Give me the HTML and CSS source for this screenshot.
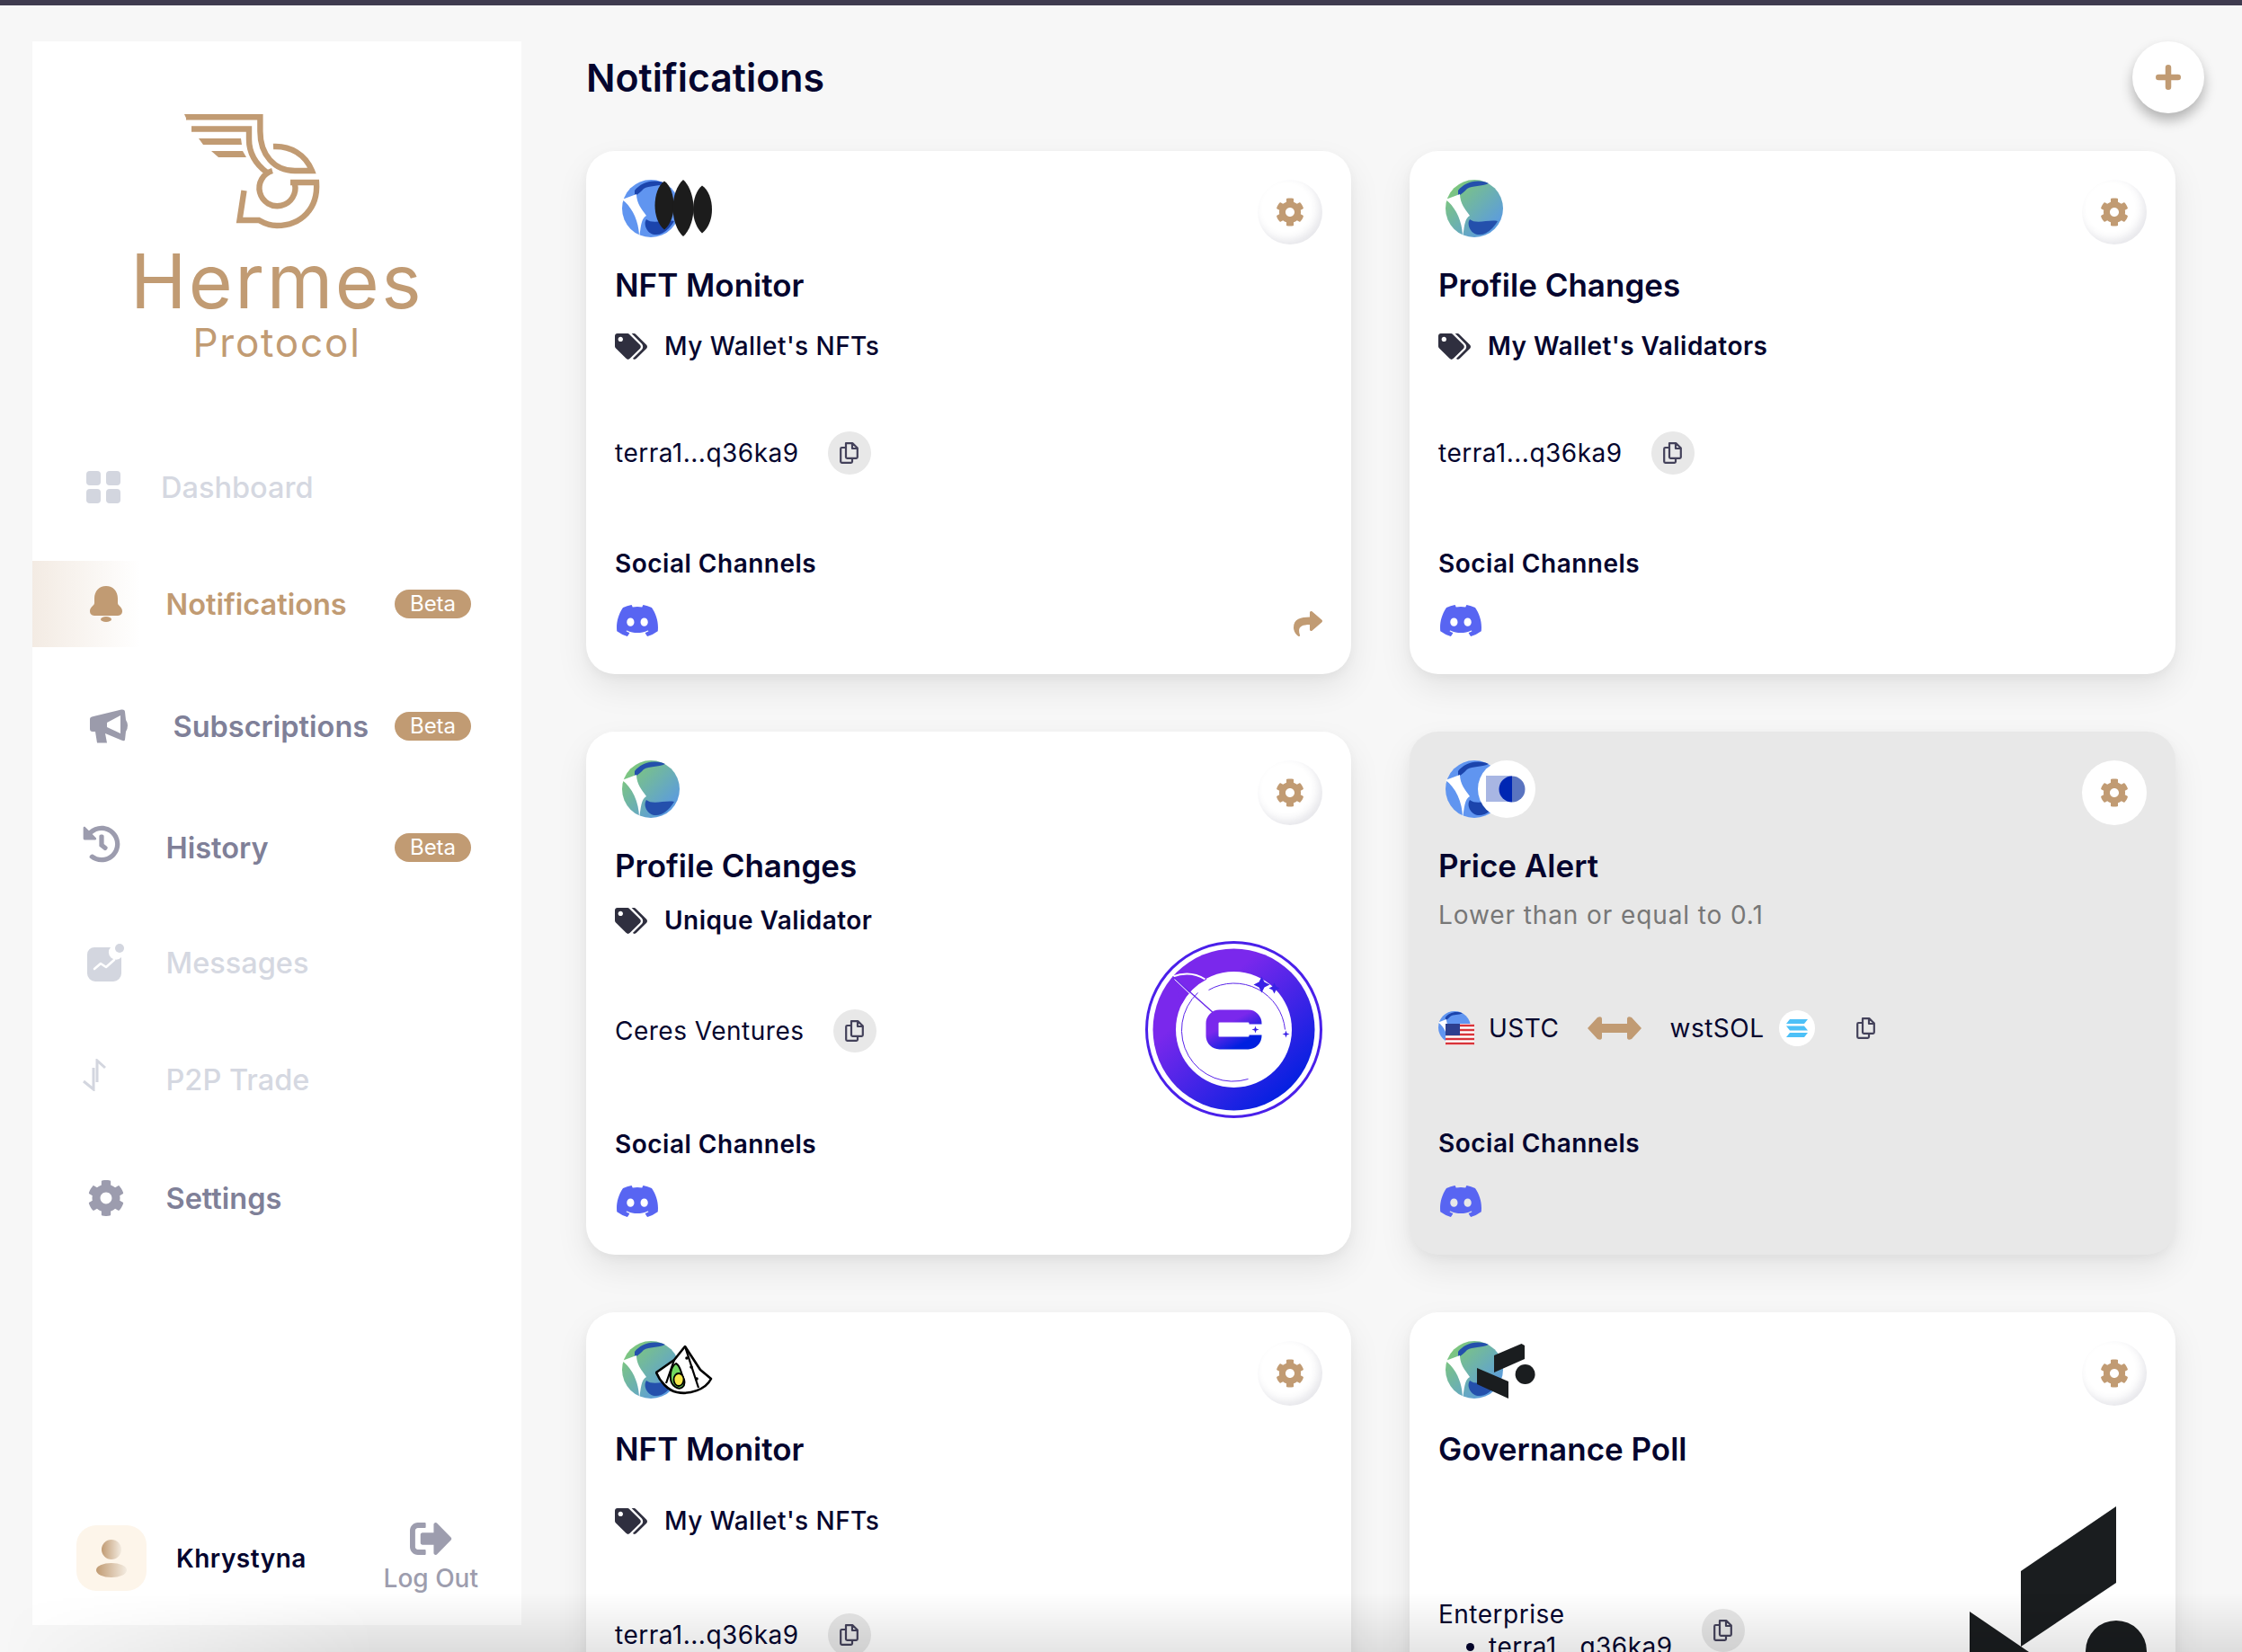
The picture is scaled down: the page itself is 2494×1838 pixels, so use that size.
FILE: index.html
```html
<!DOCTYPE html>
<html lang="en">
<head>
<meta charset="utf-8">
<title>Hermes Protocol - Notifications</title>
<link rel="stylesheet" href="styles.css">
</head>
<body>
<svg class="sprite" aria-hidden="true">
  <defs>
    <linearGradient id="terraGreen" x1="0" y1="0" x2="1" y2="1"><stop offset="0.15" stop-color="#7dc67f"/><stop offset="0.85" stop-color="#5b9be0"/></linearGradient>
    <linearGradient id="ceresGrad" x1="0.15" y1="0.1" x2="0.85" y2="0.9"><stop offset="0.25" stop-color="#7a28ec"/><stop offset="1" stop-color="#0020e0"/></linearGradient>
    <linearGradient id="avatarGrad" x1="0" y1="0" x2="1" y2="0"><stop offset="0" stop-color="#c19b73"/><stop offset="1" stop-color="#f3ebe0"/></linearGradient>
    <symbol id="terra-blue" viewBox="0 0 64 64">
      <circle cx="32" cy="32" r="32" fill="#6095f0"/>
      <path d="M14 12C20 4 34 -2 48 4C40 8 30 6 24 10C20 14 18 16 14 18Z" fill="#1b44ac"/>
      <path d="M27 44C34 50 48 44 58 46C52 56 44 62 36 61C28 60 23 50 27 44Z" fill="#1b44ac"/>
      <path d="M0 22L16 16C16 26 22 33 27 40C21 43 21 53 19 64C19 46 11 30 0 22Z" fill="#fff"/>
    </symbol>
    <symbol id="terra-green" viewBox="0 0 64 64">
      <circle cx="32" cy="32" r="32" fill="url(#terraGreen)"/>
      <path d="M14 12C20 4 34 -2 48 4C40 8 30 6 24 10C20 14 18 16 14 18Z" fill="#2450ac"/>
      <path d="M27 44C34 50 48 44 58 46C52 56 44 62 36 61C28 60 23 50 27 44Z" fill="#2450ac"/>
      <path d="M0 22L16 16C16 26 22 33 27 40C21 43 21 53 19 64C19 46 11 30 0 22Z" fill="#fff"/>
    </symbol>
    <symbol id="tag" viewBox="0 0 640 512"><path d="M497.941 225.941L286.059 14.059A48 48 0 0 0 252.118 0H48C21.49 0 0 21.49 0 48v204.118a48 48 0 0 0 14.059 33.941l211.882 211.882c18.744 18.745 49.136 18.746 67.882 0l204.118-204.118c18.745-18.745 18.745-49.137 0-67.882zM112 160c-26.51 0-48-21.49-48-48s21.49-48 48-48 48 21.49 48 48-21.49 48-48 48zm513.941 133.823L421.823 497.941c-18.745 18.745-49.137 18.745-67.882 0l-.36-.36L527.64 323.522c16.999-16.999 26.36-39.6 26.36-63.64s-9.362-46.641-26.36-63.64L331.397 0h48.721a48 48 0 0 1 33.941 14.059l211.882 211.882c18.745 18.745 18.745 49.137 0 67.882z"/></symbol>
    <symbol id="cog" viewBox="17 8 478 496"><path d="M487.4 315.7l-42.6-24.6c4.3-23.2 4.3-47 0-70.2l42.6-24.6c4.9-2.8 7.1-8.6 5.5-14-11.1-35.6-30-67.8-54.7-94.6-3.8-4.1-10-5.1-14.8-2.3L380.8 110c-17.9-15.4-38.5-27.3-60.8-35.1V25.8c0-5.6-3.9-10.5-9.4-11.7-36.7-8.2-74.3-7.8-109.2 0-5.5 1.2-9.4 6.1-9.4 11.7V75c-22.2 7.9-42.8 19.8-60.8 35.1L88.7 85.5c-4.9-2.8-11-1.9-14.8 2.3-24.7 26.7-43.6 58.9-54.7 94.6-1.7 5.4.6 11.2 5.5 14L67.3 221c-4.3 23.2-4.3 47 0 70.2l-42.6 24.6c-4.9 2.8-7.1 8.6-5.5 14 11.1 35.6 30 67.8 54.7 94.6 3.8 4.1 10 5.1 14.8 2.3l42.6-24.6c17.9 15.4 38.5 27.3 60.8 35.1v49.2c0 5.6 3.9 10.5 9.4 11.7 36.7 8.2 74.3 7.8 109.2 0 5.5-1.2 9.4-6.1 9.4-11.7v-49.2c22.2-7.9 42.8-19.8 60.8-35.1l42.6 24.6c4.9 2.8 11 1.9 14.8-2.3 24.7-26.7 43.6-58.9 54.7-94.6 1.500-5.500-.7-11.300-5.600-14.100zM256 336c-44.100 0-80-35.900-80-80s35.900-80 80-80 80 35.900 80 80-35.900 80-80 80z"/></symbol>
    <symbol id="discord" viewBox="28 32 584 448"><path d="M524.531,69.836a1.5,1.5,0,0,0-.764-.7A485.065,485.065,0,0,0,404.081,32.03a1.816,1.816,0,0,0-1.923.91,337.461,337.461,0,0,0-14.9,30.6,447.848,447.848,0,0,0-134.426,0,309.541,309.541,0,0,0-15.135-30.6,1.89,1.89,0,0,0-1.924-.91A483.689,483.689,0,0,0,116.085,69.137a1.712,1.712,0,0,0-.788.676C39.068,183.651,18.186,294.69,28.43,404.354a2.016,2.016,0,0,0,.765,1.375A487.666,487.666,0,0,0,176.02,479.918a1.9,1.9,0,0,0,2.063-.676A348.2,348.2,0,0,0,208.12,430.4a1.86,1.86,0,0,0-1.019-2.588,321.173,321.173,0,0,1-45.868-21.853,1.885,1.885,0,0,1-.185-3.126c3.082-2.309,6.166-4.711,9.109-7.137a1.819,1.819,0,0,1,1.9-.256c96.229,43.917,200.41,43.917,295.5,0a1.812,1.812,0,0,1,1.924.233c2.944,2.426,6.027,4.851,9.132,7.16a1.884,1.884,0,0,1-.162,3.126,301.407,301.407,0,0,1-45.89,21.83,1.875,1.875,0,0,0-1,2.611,391.055,391.055,0,0,0,30.014,48.815,1.864,1.864,0,0,0,2.063.7A486.048,486.048,0,0,0,610.7,405.729a1.882,1.882,0,0,0,.765-1.352C623.729,277.594,590.933,167.465,524.531,69.836ZM222.491,337.58c-28.972,0-52.844-26.587-52.844-59.239S193.056,219.1,222.491,219.1c29.665,0,53.306,26.82,52.843,59.239C275.334,310.993,251.924,337.58,222.491,337.58Zm195.38,0c-28.971,0-52.843-26.587-52.843-59.239S388.437,219.1,417.871,219.1c29.667,0,53.307,26.82,52.844,59.239C470.715,310.993,447.538,337.58,417.871,337.58Z"/></symbol>
    <symbol id="copy" viewBox="0 0 21 24"><path d="M7 1.2H14.5L19.8 6.5V16.5A1.3 1.3 0 0 1 18.5 17.8H8.3A1.3 1.3 0 0 1 7 16.5ZM14 1.5V7H19.5M7 6H2.5A1.3 1.3 0 0 0 1.2 7.3V21.5A1.3 1.3 0 0 0 2.5 22.8H12.7A1.3 1.3 0 0 0 14 21.5V18" fill="none" stroke="#43415a" stroke-width="2.2" stroke-linejoin="round"/></symbol>
  </defs>
</svg>

<div class="topbar"></div>
<div class="app">
  <aside class="sidebar">
    <div class="brand">
      <svg class="brand-mark" viewBox="190 120 236 140" fill="none" stroke="#c19b73" stroke-width="6.4">
        <path d="M205 127H208V133.400Z" fill="#c19b73" stroke="none"/>
        <path d="M207 130.200H289.400V146C289.400 172 305 190 328 190H347C340 172 323 162 304 163"/>
        <path d="M213 143.500H277V155C277 170 285 183 297 192"/>
        <path d="M303 190A20 20 0 1 0 328 205"/>
        <path d="M323 203H352C354 232 335 251 308 251C300 251 295 249 288 245H266.500L271.500 212"/>
        <polygon points="221,154 268,154 269,161 226,161" fill="#c19b73" stroke="none"/>
        <polygon points="235,168 270,168 274,175 243,175" fill="#c19b73" stroke="none"/>
      </svg>
      <div class="brand-name">Hermes</div>
      <div class="brand-sub">Protocol</div>
    </div>
    <nav class="nav">
      <div class="nav-item is-disabled">
        <span class="nav-icon nav-icon--dash">
          <svg width="38" height="36" viewBox="0 0 38 36" fill="#d3d6df"><rect width="16" height="16" rx="4"/><rect x="22" width="16" height="16" rx="4"/><rect y="20" width="16" height="16" rx="4"/><rect x="22" y="20" width="16" height="16" rx="4"/></svg>
        </span>
        <span class="nav-label">Dashboard</span>
      </div>
      <div class="nav-item is-active">
        <span class="nav-icon">
          <svg class="shift-8" width="36" height="40" viewBox="0 0 36 40" fill="#c19b73"><path d="M18 0C26 0 31 6 31 14V19C31 22 36 23 36 28C36 32 33 33 30 33H6C3 33 0 32 0 28C0 23 5 22 5 19V14C5 6 10 0 18 0Z"/><ellipse cx="18" cy="37" rx="6" ry="3"/></svg>
        </span>
        <span class="nav-label">Notifications</span>
        <span class="beta">Beta</span>
      </div>
      <div class="nav-item nav-item--subs">
        <span class="nav-icon nav-icon--subs">
          <svg class="shift-8" width="42" height="38" viewBox="0 0 42 38" fill="#9b9bab"><path fill-rule="evenodd" d="M4 8L35 0.5Q39 0 39 3L40 12Q42 15 42 18Q42 22 40 25L39 34Q39 36 35 34.5L17 27L19 37.5H8L6 25H3Q0 25 0 22V11Q0 8.5 4 8ZM34 7L19 15V20L34 27Z"/></svg>
        </span>
        <span class="nav-label">Subscriptions</span>
        <span class="beta">Beta</span>
      </div>
      <div class="nav-item nav-item--hist">
        <span class="nav-icon">
          <svg class="lift-8" width="42" height="42" viewBox="0 0 512 512" fill="#9c9cae"><path d="M504 255.531c.253 136.64-111.18 248.372-247.82 248.468-59.015.042-113.223-20.53-155.822-54.911-11.077-8.94-11.905-25.541-1.839-35.607l11.267-11.267c8.609-8.609 22.353-9.551 31.891-1.984C173.062 425.135 212.781 440 256 440c101.705 0 184-82.311 184-184 0-101.705-82.311-184-184-184-48.814 0-93.149 18.969-126.068 49.932l50.754 50.754c10.08 10.08 2.941 27.314-11.313 27.314H24c-8.837 0-16-7.163-16-16V38.627c0-14.254 17.234-21.393 27.314-11.314l49.372 49.372C129.209 34.136 189.552 8 256 8c136.81 0 247.747 110.78 248 247.531zm-180.912 78.784l9.823-12.63c8.138-10.463 6.253-25.542-4.21-33.679L288 256.349V152c0-13.255-10.745-24-24-24h-16c-13.255 0-24 10.745-24 24v135.651l65.409 50.874c10.463 8.137 25.541 6.253 33.679-4.21z"/></svg>
        </span>
        <span class="nav-label">History</span>
        <span class="beta">Beta</span>
      </div>
      <div class="nav-item nav-item--msg is-disabled">
        <span class="nav-icon">
          <svg class="shift-5" width="42" height="42" viewBox="0 0 42 42"><path d="M8 4H26A8 8 0 0 0 38 15V33A9 9 0 0 1 29 42H9A9 9 0 0 1 0 33V12A8 8 0 0 1 8 4Z" fill="#d3d6df"/><circle cx="36" cy="5" r="5" fill="#d3d6df"/><path d="M8 28L15 22L21 26L30 18" fill="none" stroke="#fff" stroke-width="2.6" stroke-linecap="round" stroke-linejoin="round"/></svg>
        </span>
        <span class="nav-label">Messages</span>
      </div>
      <div class="nav-item nav-item--p2p is-disabled">
        <span class="nav-icon">
          <svg class="lift" width="26" height="36" viewBox="0 0 26 36" fill="none" stroke="#d3d6df" stroke-width="3"><path d="M12 10V34L1 25"/><path d="M16 26V2L25 10"/></svg>
        </span>
        <span class="nav-label">P2P Trade</span>
      </div>
      <div class="nav-item nav-item--set">
        <span class="nav-icon">
          <svg class="shift-6" width="40" height="40" fill="#9c9cae"><use href="#cog"/></svg>
        </span>
        <span class="nav-label">Settings</span>
      </div>
    </nav>
    <div class="account">
      <div class="avatar">
        <svg width="34" height="42" viewBox="0 0 34 42"><ellipse cx="17" cy="11" rx="11" ry="11" fill="url(#avatarGrad)"/><ellipse cx="17" cy="34" rx="17" ry="8" fill="url(#avatarGrad)"/></svg>
      </div>
      <span class="account-name">Khrystyna</span>
      <div class="logout">
        <svg width="47" height="36" viewBox="0 64 512 384" preserveAspectRatio="none" fill="#9d9dae"><path d="M497 273L329 441c-15 15-41 4.5-41-17v-96H152c-13.3 0-24-10.7-24-24v-96c0-13.3 10.7-24 24-24h136V88c0-21.4 25.9-32 41-17l168 168c9.3 9.4 9.3 24.6 0 34zM192 436v-40c0-6.6-5.4-12-12-12H96c-17.7 0-32-14.3-32-32V160c0-17.7 14.3-32 32-32h84c6.6 0 12-5.4 12-12V76c0-6.6-5.4-12-12-12H96c-53 0-96 43-96 96v192c0 53 43 96 96 96h84c6.6 0 12-5.4 12-12z"/></svg>
        <span class="logout-label">Log Out</span>
      </div>
    </div>
  </aside>

  <main class="main">
    <header class="main-head">
      <h1 class="page-title">Notifications</h1>
      <button class="add-btn" type="button" aria-label="Add">
        <svg width="28" height="28" viewBox="0 0 28 28" fill="none" stroke="#c19b73" stroke-width="6.500" stroke-linecap="round"><path d="M14 3.250V24.750M3.250 14H24.750"/></svg>
      </button>
    </header>
    <section class="grid">

      <article class="card card--a">
        <div class="card-head">
          <div class="logos">
            <svg class="logo" width="64" height="64"><use href="#terra-blue"/></svg>
            <svg class="logo logo--over" width="64" height="64" viewBox="0 0 64 64" fill="#1c1c1c"><path d="M11 1.500C18 6 21.500 18 21.500 28.500C21.500 39 18 50 11 55.500C4 50 .5 39 .5 28.500C.5 18 4 6 11 1.500Z"/><path d="M32 0C39 6 43.500 19 43.500 31.500C43.500 44 39 57 32 63C25 57 20.500 44 20.500 31.500C20.500 19 25 6 32 0Z"/><path d="M53 6.500C60 11 64 22 64 33C64 44 60 54 53 59.500C47 54 43 44 43 33C43 22 47 11 53 6.500Z"/></svg>
          </div>
          <button class="gear-btn" type="button" aria-label="Settings"><svg width="30" height="32"><use href="#cog"/></svg></button>
        </div>
        <h2 class="card-title">NFT Monitor</h2>
        <div class="tag-row"><svg class="tag-icon" width="36" height="29"><use href="#tag"/></svg><span class="tag-text">My Wallet's NFTs</span></div>
        <div class="addr-row"><span class="addr">terra1...q36ka9</span><span class="copy-btn"><svg width="21" height="24"><use href="#copy"/></svg></span></div>
        <div class="social-label">Social Channels</div>
        <div class="social-row">
          <svg class="discord" width="46" height="35"><use href="#discord"/></svg>
          <svg class="share" width="32" height="28" viewBox="0 32 512 448" preserveAspectRatio="none" fill="#c19b73"><path d="M503.691 189.836L327.687 37.851C312.281 24.546 288 35.347 288 56.015v80.053C127.371 137.907 0 170.1 0 322.326c0 61.441 39.581 122.309 83.333 154.132 13.653 9.931 33.111-2.533 28.077-18.631C66.066 312.814 132.917 274.316 288 272.085V360c0 20.7 24.3 31.453 39.687 18.164l176.004-152c11.071-9.562 11.086-26.753 0-36.328z"/></svg>
        </div>
      </article>

      <article class="card card--a">
        <div class="card-head">
          <div class="logos"><svg class="logo" width="64" height="64"><use href="#terra-green"/></svg></div>
          <button class="gear-btn" type="button" aria-label="Settings"><svg width="30" height="32"><use href="#cog"/></svg></button>
        </div>
        <h2 class="card-title">Profile Changes</h2>
        <div class="tag-row"><svg class="tag-icon" width="36" height="29"><use href="#tag"/></svg><span class="tag-text tag-text--strong">My Wallet's Validators</span></div>
        <div class="addr-row"><span class="addr">terra1...q36ka9</span><span class="copy-btn"><svg width="21" height="24"><use href="#copy"/></svg></span></div>
        <div class="social-label">Social Channels</div>
        <div class="social-row"><svg class="discord" width="46" height="35"><use href="#discord"/></svg></div>
      </article>

      <article class="card card--b">
        <div class="card-head">
          <div class="logos"><svg class="logo" width="64" height="64"><use href="#terra-green"/></svg></div>
          <button class="gear-btn" type="button" aria-label="Settings"><svg width="30" height="32"><use href="#cog"/></svg></button>
        </div>
        <h2 class="card-title">Profile Changes</h2>
        <div class="tag-row"><svg class="tag-icon" width="36" height="29"><use href="#tag"/></svg><span class="tag-text tag-text--strong">Unique Validator</span></div>
        <div class="addr-row"><span class="addr">Ceres Ventures</span><span class="copy-btn"><svg width="21" height="24"><use href="#copy"/></svg></span></div>
        <div class="social-label">Social Channels</div>
        <div class="social-row"><svg class="discord" width="46" height="35"><use href="#discord"/></svg></div>
        <svg class="feature feature--ceres" width="197" height="197" viewBox="-98.5 -98.5 197 197">
          <circle r="97" fill="none" stroke="#4a20ea" stroke-width="3"/>
          <circle r="90" fill="url(#ceresGrad)"/>
          <circle r="64.5" fill="#fff"/>
          <path d="M-30 -56A64.5 64.5 0 0 0 -58 -28L-68 -59Q-48 -66 -30 -56Z" fill="#7a28ec"/>
          <path d="M-68 -59Q-48 -66 -32 -56" fill="none" stroke="#fff" stroke-width="2"/>
          <path d="M-68 -59L-12 -9" fill="none" stroke="#6a2aea" stroke-width="1.5"/>
          <path d="M-66 -56L-14 -7" fill="none" stroke="#fff" stroke-width="1"/>
          <path d="M-28 -44A57 57 0 0 1 57 0" fill="none" stroke="#5a25ea" stroke-width="1"/>
          <path d="M-40 -41A57 57 0 0 0 16 55" fill="none" stroke="#5a25ea" stroke-width="1"/>
          <path d="M24 -6V-7A8 8 0 0 0 16 -15H-16A8 8 0 0 0 -24 -7V7A8 8 0 0 0 -16 15H16A8 8 0 0 0 24 7V6" fill="none" stroke="url(#ceresGrad)" stroke-width="14"/>
          <path d="M31 -59L34 -53L40 -50L34 -47L31 -41L28 -47L22 -50L28 -53ZM45 -52L47 -48L51 -46L47 -44L45 -40L43 -44L39 -46L43 -48ZM24 -4L25 -1L28 0L25 1L24 4L23 1L20 0L23 -1ZM58 1L59 4L62 5L59 6L58 9L57 6L54 5L57 4Z" fill="#3a22e6"/>
        </svg>
      </article>

      <article class="card card--c">
        <div class="card-head">
          <div class="logos">
            <svg class="logo" width="64" height="64"><use href="#terra-blue"/></svg>
            <svg class="logo logo--over" width="64" height="64" viewBox="0 0 64 64"><circle cx="32" cy="32" r="32" fill="#fff"/><rect x="9" y="17" width="29" height="29" fill="#a8b6e3"/><path d="M38 17.500A14.500 14.500 0 0 0 38 46.500Z" fill="#0026b3"/><path d="M38 17.500A14.500 14.500 0 0 1 38 46.500Z" fill="#5a74c0"/></svg>
          </div>
          <button class="gear-btn gear-btn--flat" type="button" aria-label="Settings"><svg width="30" height="32"><use href="#cog"/></svg></button>
        </div>
        <h2 class="card-title">Price Alert</h2>
        <div class="card-sub">Lower than or equal to 0.1</div>
        <div class="pair-row">
          <svg class="pair-coin" width="40" height="38" viewBox="0 0 40 38">
            <svg width="36" height="36"><use href="#terra-blue"/></svg>
            <g><rect x="8" y="14" width="32" height="24" rx="2" fill="#fff"/><path d="M8 16H40M8 21H40M8 26H40M8 31H40M8 36H40" stroke="#d8343a" stroke-width="2.5"/><rect x="8" y="14" width="16" height="13" fill="#2d3f8e"/></g>
          </svg>
          <span class="pair-text">USTC</span>
          <svg class="pair-arrow" width="60" height="26" viewBox="0 0 60 26" fill="#c19b73"><path d="M0 13L11 1Q16 -1 16 3V8H44V3Q44 -1 49 1L60 13L49 25Q44 27 44 23V18H16V23Q16 27 11 25Z"/></svg>
          <span class="pair-text">wstSOL</span>
          <span class="sol-coin">
            <svg width="24" height="20" viewBox="0 0 24 20" fill="#4cc0f7"><path d="M4 0H24L20 5H0Z"/><path d="M0 7.500H20L24 12.500H4Z"/><path d="M4 15H24L20 20H0Z"/></svg>
          </span>
          <svg class="pair-copy" width="21" height="24"><use href="#copy"/></svg>
        </div>
        <div class="social-label">Social Channels</div>
        <div class="social-row"><svg class="discord" width="46" height="35"><use href="#discord"/></svg></div>
      </article>

      <article class="card card--d">
        <div class="card-head">
          <div class="logos">
            <svg class="logo" width="64" height="64"><use href="#terra-green"/></svg>
            <svg class="logo logo--over logo--avo" width="64" height="56" viewBox="0 0 64 56">
              <path d="M33 1L21 16L1 30C5 40 14 50 24 52C38 55 56 49 62 37L50 27Z" fill="#fff" stroke="#000" stroke-width="2.6" stroke-linejoin="round"/>
              <path d="M33 1L48 47M21 16L12 42" fill="none" stroke="#000" stroke-width="2.2"/>
              <path d="M23 20C28 22 28 30 32 38C34 46 28 50 22 46C14 41 16 24 23 20Z" fill="#70d860" stroke="#000" stroke-width="2"/>
              <ellipse cx="26" cy="38" rx="5.500" ry="7" fill="#f5e84a" stroke="#000" stroke-width="1.800"/>
              <circle cx="35" cy="14" r="1.800"/><circle cx="40" cy="24" r="1.800"/><circle cx="46" cy="37" r="1.800"/>
            </svg>
          </div>
          <button class="gear-btn" type="button" aria-label="Settings"><svg width="30" height="32"><use href="#cog"/></svg></button>
        </div>
        <h2 class="card-title">NFT Monitor</h2>
        <div class="tag-row"><svg class="tag-icon" width="36" height="29"><use href="#tag"/></svg><span class="tag-text">My Wallet's NFTs</span></div>
        <div class="addr-row"><span class="addr">terra1...q36ka9</span><span class="copy-btn"><svg width="21" height="24"><use href="#copy"/></svg></span></div>
      </article>

      <article class="card card--e">
        <div class="card-head">
          <div class="logos">
            <svg class="logo" width="64" height="64"><use href="#terra-green"/></svg>
            <svg class="logo logo--over logo--k" width="65" height="61" viewBox="0 0 65 61" fill="#1a1d1f"><path d="M19 13L49.500 0L53 2V17L19 32Z"/><path d="M0 27L35 42V61L0 45Z"/><circle cx="53.600" cy="34" r="11"/></svg>
          </div>
          <button class="gear-btn" type="button" aria-label="Settings"><svg width="30" height="32"><use href="#cog"/></svg></button>
        </div>
        <h2 class="card-title">Governance Poll</h2>
        <div class="addr-row addr-row--list">
          <div class="addr-list">
            <div class="addr">Enterprise</div>
            <ul class="addr-items"><li class="addr">terra1...q36ka9</li></ul>
          </div>
          <span class="copy-btn"><svg width="21" height="24"><use href="#copy"/></svg></span>
        </div>
        <svg class="feature feature--k" width="197" height="197" viewBox="0 0 197 197" fill="#1a1d1f"><path d="M57 72L163 0V85L57 156Z"/><path d="M0 117L66 162L140 230H0Z"/><circle cx="163" cy="161" r="34"/></svg>
      </article>

    </section>
  </main>
</div>
<div class="bottom-fade"></div>
</body>
</html>
```
FILE: styles.css
```css
* { box-sizing: border-box; }
html, body { height: 100%; }
body {
  margin: 0;
  background: #f7f7f7;
  color: #05052e;
  font-family: Inter, "Noto Sans", sans-serif;
  overflow: hidden;
  position: relative;
}
.sprite { position: absolute; width: 0; height: 0; }
.topbar { height: 6px; background: #3f3b4f; }
.app {
  display: flex;
  height: 1832px;
  overflow: hidden;
  padding: 40px 0 0 36px;
}

/* Sidebar */
.sidebar {
  width: 544px;
  flex: none;
  height: 1762px;
  background: #fff;
  display: flex;
  flex-direction: column;
}
.brand {
  height: 448px;
  padding-top: 74px;
  display: flex;
  flex-direction: column;
  align-items: center;
  color: #c19b73;
}
.brand-mark { width: 236px; height: 140px; flex: none; }
.brand-name {
  font-weight: 400;
  font-size: 84px;
  line-height: 80px;
  margin-top: 13px;
  letter-spacing: 2.5px;
}
.brand-sub {
  font-weight: 400;
  font-size: 44px;
  line-height: 50px;
  margin-top: 3px;
  letter-spacing: 1.8px;
}
.nav { display: flex; flex-direction: column; }
.nav-item {
  height: 96px;
  display: flex;
  align-items: center;
  padding-left: 56px;
  margin-bottom: 34px;
  color: #7f8098;
  font-size: 32.5px;
  font-weight: 600;
}
.nav-item.is-disabled { color: #d5d8e1; font-weight: 500; }
.nav-item.is-active {
  color: #c19b73;
  margin-bottom: 40px;
  background: linear-gradient(to right, #f3ebe3 0, #ffffff 120px);
}
.nav-item--subs { margin-bottom: 39px; }
.nav-item--hist { margin-bottom: 32px; }
.nav-item--msg { margin-bottom: 34px; }
.nav-item--p2p { margin-bottom: 36px; }
.nav-icon { width: 92.5px; flex: none; display: flex; align-items: center; }
.nav-icon--dash { width: 87px; padding-left: 4px; }
.nav-icon--subs { width: 100.5px; }
.shift-8 { margin-left: 8px; }
.shift-5 { margin-left: 5px; }
.shift-6 { margin-left: 6px; }
.lift { margin-top: -10px; }
.lift-8 { margin-top: -8px; }
.nav-label { flex: none; }
.beta {
  margin-left: auto;
  margin-right: 56px;
  width: 85px;
  height: 32px;
  border-radius: 16px;
  background: #c19b73;
  color: #fff;
  font-size: 24px;
  font-weight: 400;
  line-height: 32px;
  text-align: center;
}
.account {
  margin-top: auto;
  padding: 0 48px 35px 49px;
  display: flex;
  align-items: center;
}
.avatar {
  width: 78px;
  height: 73px;
  border-radius: 22px;
  background: #fdf5ea;
  display: flex;
  align-items: center;
  justify-content: center;
}
.account-name { margin-left: 33px; font-size: 28px; letter-spacing: .5px; font-weight: 600; }
.logout {
  margin-left: auto;
  display: flex;
  flex-direction: column;
  align-items: center;
  color: #9d9dae;
  font-size: 28px;
  font-weight: 500;
}
.logout-label { line-height: 34px; margin-top: 9px; }

/* Main */
.main { flex: 1; min-width: 0; padding-left: 72px; }
.main-head {
  width: 1800px;
  height: 80px;
  margin-bottom: 42px;
  display: flex;
  align-items: center;
  justify-content: space-between;
}
.page-title { margin: 2px 0 0; font-size: 42.8px; font-weight: 600; line-height: 78px; }
.add-btn {
  width: 80px;
  height: 80px;
  padding: 0;
  border: 0;
  border-radius: 50%;
  background: #fff;
  box-shadow: 0 8px 14px rgba(0, 0, 0, .28);
  display: flex;
  align-items: center;
  justify-content: center;
}
.grid {
  display: grid;
  grid-template-columns: 851px 852px;
  grid-auto-rows: 582px;
  gap: 64px 65px;
}

/* Card */
.card {
  position: relative;
  background: #fff;
  border-radius: 32px;
  padding: 32px;
  box-shadow: 0 16px 36px rgba(0, 0, 0, .08), 0 4px 12px rgba(0, 0, 0, .04);
  --title-top: 21px;
  --tag-top: 24px;
  --addr-top: 75px;
  --social-top: 81px;
  --disc-top: 28px;
}
.card--b { --tag-top: 17px; --addr-top: 79px; --social-top: 84px; }
.card--c { background: #e8e8e8; --social-top: 86px; --disc-top: 29px; }
.card--d { --title-top: 24px; --tag-top: 36px; --addr-top: 83px; }
.card--e { --title-top: 24px; --addr-top: 140px; }
.card-head { height: 72px; display: flex; justify-content: space-between; align-items: flex-start; }
.logos { display: flex; margin-left: 8px; }
.logo { flex: none; display: block; }
.logo--over { margin-left: -28px; }
.logo--avo { margin-top: 5px; margin-left: -27px; }
.logo--k { margin-top: 3px; margin-left: -29px; }
.gear-btn {
  width: 72px;
  height: 72px;
  padding: 0;
  border: 0;
  border-radius: 50%;
  background: #fff;
  fill: #c19b73;
  box-shadow: inset -4px -5px 10px rgba(60, 60, 90, .12);
  display: flex;
  align-items: center;
  justify-content: center;
}
.gear-btn--flat { box-shadow: none; }
.card-title { margin: var(--title-top) 0 0; font-size: 35px; font-weight: 600; line-height: 48px; }
.tag-row { height: 40px; margin-top: var(--tag-top); display: flex; align-items: center; }
.tag-icon { fill: #2f2f3f; flex: none; }
.tag-text { margin-left: 19px; font-size: 28px; font-weight: 500; letter-spacing: .45px; }
.tag-text--strong { font-weight: 600; }
.addr-row { height: 48px; margin-top: var(--addr-top); display: flex; align-items: center; }
.addr { font-size: 28px; font-weight: 400; line-height: 36px; letter-spacing: .5px; }
.copy-btn {
  width: 48px;
  height: 48px;
  margin-left: 32px;
  border-radius: 50%;
  background: #e8e8e8;
  display: flex;
  align-items: center;
  justify-content: center;
  flex: none;
}
.social-label { margin-top: var(--social-top); font-size: 28px; font-weight: 600; line-height: 36px; letter-spacing: .5px; }
.social-row {
  height: 35px;
  margin-top: var(--disc-top);
  display: flex;
  justify-content: space-between;
  align-items: flex-end;
}
.discord { fill: #5865f2; margin-left: 2px; }
.card-sub { height: 40px; margin-top: 11px; color: #777; font-size: 28px; line-height: 40px; letter-spacing: .9px; }
.pair-row { height: 48px; margin-top: 82px; display: flex; align-items: center; }
.pair-text { font-size: 28px; letter-spacing: .5px; }
.pair-coin { margin-right: 16px; flex: none; }
.pair-arrow { margin: 0 32px 0 31px; flex: none; }
.sol-coin {
  width: 40px;
  height: 40px;
  margin-left: 16px;
  border-radius: 50%;
  background: #fff;
  display: flex;
  align-items: center;
  justify-content: center;
}
.pair-copy { margin-left: 46px; }
.addr-row--list { height: 76px; }
.addr-list { display: flex; flex-direction: column; }
.addr-items { margin: 0; padding: 0 0 0 56px; }
.feature { position: absolute; right: 32px; }
.feature--ceres { top: 233px; }
.feature--k { top: 216px; }

/* Viewport-wide shade along the bottom edge */
.bottom-fade {
  position: absolute;
  left: 0;
  right: 0;
  bottom: 0;
  height: 66px;
  background: linear-gradient(to bottom, rgba(0, 0, 0, 0), rgba(0, 0, 0, .1));
  -webkit-mask-image: linear-gradient(to right, transparent 0, #000 420px);
  mask-image: linear-gradient(to right, transparent 0, #000 420px);
  pointer-events: none;
}
```
